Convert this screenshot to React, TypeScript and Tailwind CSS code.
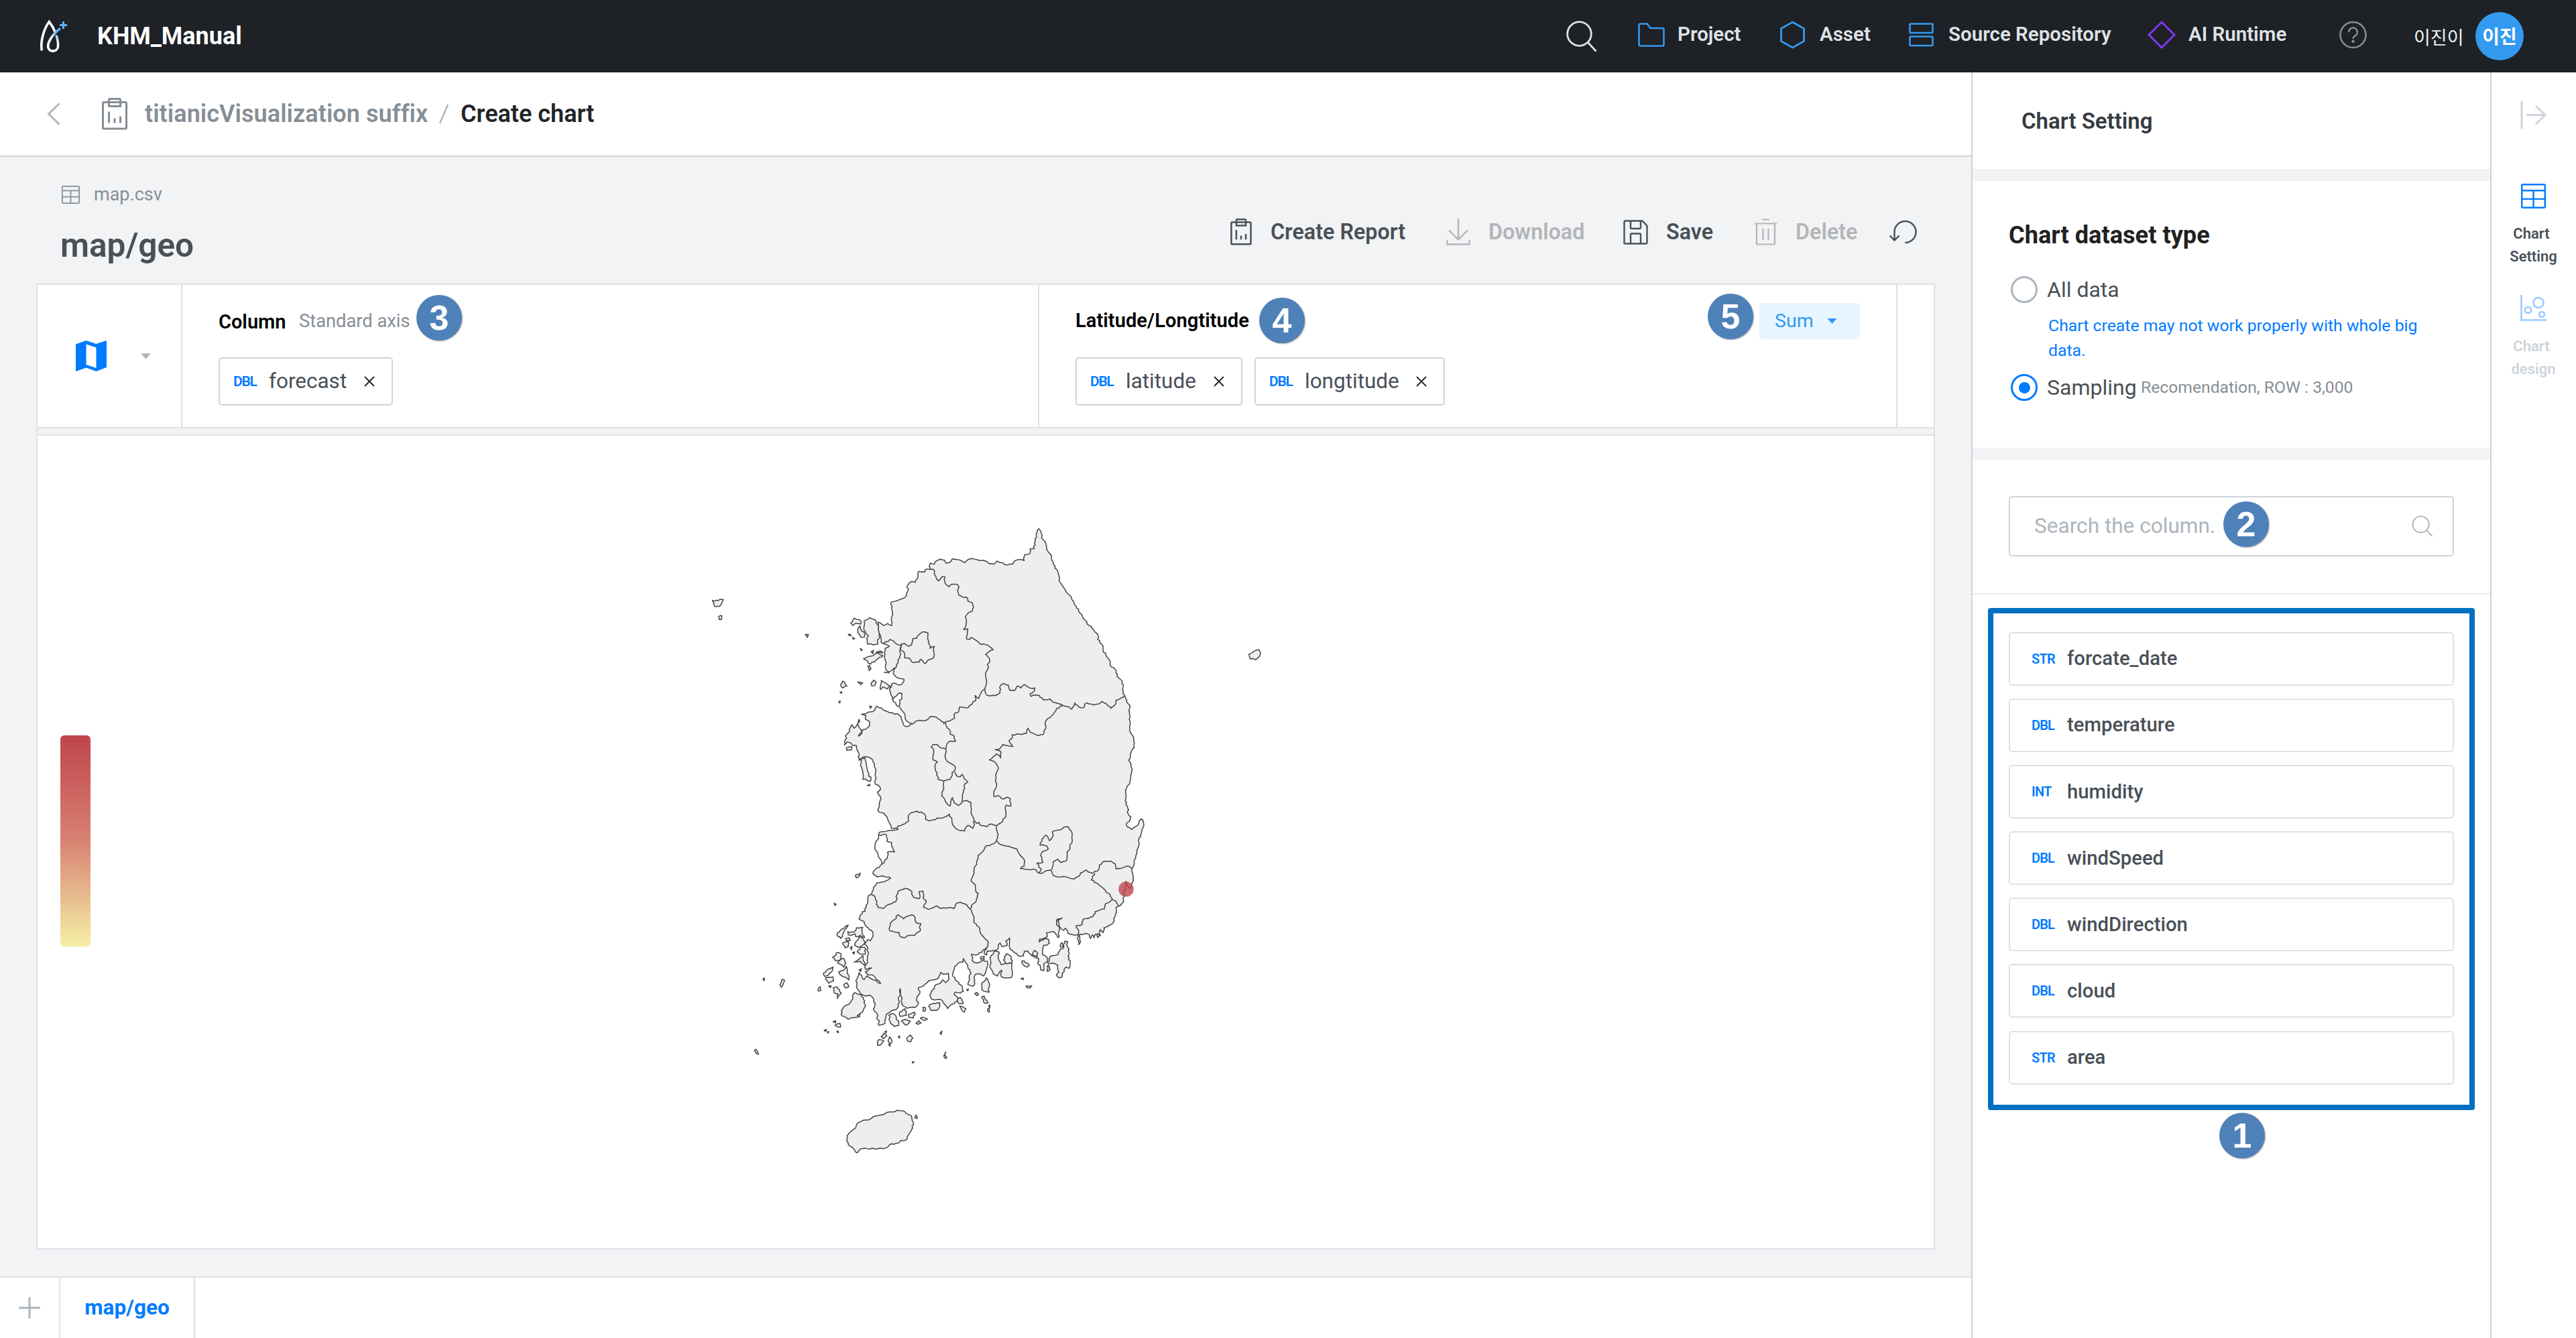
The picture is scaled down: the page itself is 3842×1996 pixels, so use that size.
import React from "react";

type P = { className?: string };

/* ---------- icons ---------- */

const Logo = () => (
  <svg className="h-[50px] w-[44px]" viewBox="0 0 44 50" fill="none">
    <defs>
      <linearGradient id="lg" x1="12" y1="40" x2="32" y2="12" gradientUnits="userSpaceOnUse">
        <stop offset="0.35" stopColor="#fff" />
        <stop offset="0.8" stopColor="#5eb3fa" />
      </linearGradient>
    </defs>
    <path d="M4.5 46.500C2 36 6 16 15.200 3.500C19 8 22 13 24 18.500" stroke="#fff" strokeWidth="3.600" />
    <path d="M26 23.500C28 30 29 37 28.500 41C27 49 14.500 49.500 13.600 40.500C13.500 36 16 31 19 26.500C23 21 27 16.500 32 13.500" stroke="url(#lg)" strokeWidth="3.600" />
    <path d="M36.500 3v11M31 8.500h11" stroke="#5eb3fa" strokeWidth="3" />
  </svg>
);

const Search = ({ className = "" }: P) => (
  <svg className={className} viewBox="0 0 46 47" fill="none" stroke="currentColor" strokeWidth="2.800">
    <circle cx="19.500" cy="19.500" r="17.800" />
    <path d="M32 32l12.500 13.500" />
  </svg>
);

const Clipboard = ({ className = "" }: P) => (
  <svg className={className} viewBox="0 0 38 48" fill="none" stroke="currentColor" strokeWidth="3">
    <rect x="1.500" y="6.500" width="35" height="39.500" rx="1.500" />
    <path d="M10.500 12.500v-9.500a1.500 1.500 0 0 1 1.500-1.500h14a1.500 1.500 0 0 1 1.500 1.500v9.500z" />
    <path d="M10.500 20.500v17M19 30.500v7M27.500 27.500v10" />
  </svg>
);

const Table = ({ className = "" }: P) => (
  <svg className={className} viewBox="0 0 38 38" fill="none" stroke="currentColor" strokeWidth="2.500">
    <rect x="1.250" y="1.250" width="35.500" height="35.500" rx="1.500" />
    <path d="M1 10.500h36M1 23.500h36M19 10.500v26" />
  </svg>
);

const Caret = ({ className = "" }: P) => (
  <svg className={className} viewBox="0 0 16 9"><path d="M0 0h16l-8 9z" fill="currentColor" /></svg>
);

const Cross = () => (
  <svg className="h-[16px] w-[16px] text-[#212529]" viewBox="0 0 16 16" stroke="currentColor" strokeWidth="1.900">
    <path d="M1 1l14 14M15 1L1 15" />
  </svg>
);

/* ---------- shared pieces ---------- */

const Badge = ({ n, className = "" }: { n: number; className?: string }) => (
  <div className={`flex h-[68px] w-[68px] items-center justify-center rounded-full bg-[#4f81b9] pb-[1px] font-['Liberation_Sans',sans-serif] text-[52px] leading-none font-bold text-white shadow-[1px_1px_2px_rgba(0,0,0,0.35)] ${className}`}>
    {n}
  </div>
);

const Chip = ({ label, width }: { label: string; width: string }) => (
  <div className={`flex h-[72px] items-center rounded-[5px] border-2 border-[#ced4da] bg-white pl-[20px] ${width}`}>
    <span className="w-[53px] text-[21px] leading-none font-semibold tracking-[-1.2px] text-[#007bff]">DBL</span>
    <span className="text-[31.5px] leading-none text-[#495057]">{label}</span>
    <span className="mr-[25px] ml-auto"><Cross /></span>
  </div>
);

/* ---------- map ---------- */

// Adds small deterministic wiggles between survey points so borders read as coastline.
const rough = (src: string, amp = 0.13) => {
  const pts = src.trim().split(/\s+/).map((p) => p.split(",").map(Number));
  const out: number[][] = [];
  for (let i = 0; i < pts.length; i++) {
    out.push(pts[i]);
    const a = pts[i];
    const b = pts[i + 1];
    if (!b) break;
    const dx = b[0] - a[0];
    const dy = b[1] - a[1];
    const len = Math.hypot(dx, dy);
    const n = len > 9 ? Math.min(4, Math.round(len / 8)) : 1;
    for (let k = 1; k < n; k++) {
      const h = Math.sin(a[0] * 12.9 + a[1] * 78.2 + k * 37.7) * 43758.5;
      const r = (h - Math.floor(h) - 0.5) * 2 * Math.min(len * amp, 3.2);
      out.push([a[0] + (dx * k) / n - (dy / len) * r, a[1] + (dy * k) / n + (dx / len) * r]);
    }
  }
  return "M" + out.map((p) => p[0].toFixed(1) + " " + p[1].toFixed(1)).join("L");
};

const NORTH_COAST =
  "246,1430 262,1400 262,1382 284,1382 278,1362 274,1342 260,1338 258,1312 234,1312 236,1302 258,1298 280,1294 296,1290 290,1284 274,1286 266,1260 262,1246 252,1226 232,1216 236,1190 240,1158 230,1140 240,1128 236,1116 224,1108 226,1082 222,1040 216,1012 200,998 184,998 172,1012 172,984 166,970 164,952 152,952 146,942 134,938 126,950 128,930 134,906 142,896 144,880 150,868 156,882 164,872 172,846 170,872 178,888 182,898 170,914 180,904 182,890 194,886 206,868 206,856 192,846 194,832 180,826 200,818 214,816 228,793 248,808 268,820 294,824 306,838 312,868 320,876 330,874 340,864 328,858 322,852 318,838 314,820 306,808 298,792 300,768 308,764 308,742 300,740 290,752 278,766 272,740 268,712 274,716 276,702 306,706 314,692 314,684 302,682 290,676 280,662 286,640 280,644 266,656 258,648 257,626 253,590 254,560 268,552 262,548 250,542 242,536 236,500 232,454 240,458 250,468 262,460 276,468 274,446 278,424 276,402 274,374 286,370 302,362 318,354 326,330 326,304 338,290 350,294 354,282 360,250 380,252 382,242 396,242 394,228 398,216 410,220 416,208 430,200 442,204 446,216 458,214 466,200 478,202 494,206 508,214 520,200 530,198 544,202 556,206 572,208 584,219 600,220 608,208 620,214 640,224 658,220 662,210 676,202 694,206 696,182 712,178 712,160 726,158 726,134 733,112 732,98 740,78 748,96 754,122 763,142 765,160 777,180 780,198 786,214 791,236 801,254 804,286 812,302 822,320 827,334 838,346 845,364 853,384 866,402 869,416 880,438 900,468 913,485 928,508 926,524 943,550 943,566 953,590 963,606 966,628 981,644 987,672 997,684 1008,708 1007,735 1013,756 1018,778 1029,792 1027,820 1028,852 1028,886 1034,908 1040,920 1042,940 1042,960 1034,972 1029,990 1024,1012 1032,1030 1034,1056 1031,1082 1028,1098 1018,1122 1016,1160 1015,1190 1021,1204 1022,1226 1031,1240 1026,1258 1016,1270 1020,1280 1034,1291 1042,1282 1054,1272 1058,1256 1064,1248 1070,1254 1071,1280 1066,1298 1062,1318 1057,1326 1057,1344 1050,1376 1046,1408 1040,1436 1034,1450";

const SOUTH_COAST =
  "1034,49 1036,68 1040,84 1038,104 1034,124 1028,136 1020,124 1016,104 1015,140 1008,150 1010,172 1008,196 1000,210 992,216 984,220 983,250 975,290 965,300 958,306 946,312 944,334 934,320 930,350 920,340 914,358 910,344 904,360 900,344 892,338 880,342 866,344 846,343 832,336 824,314 818,324 812,318 806,308 796,298 796,278 814,268 800,280 804,330 805,352 800,356 794,340 788,330 776,332 764,335 768,350 742,364 742,376 758,360 772,366 774,380 766,390 756,390 752,432 766,444 768,460 756,472 756,504 746,500 744,480 736,470 740,450 728,444 716,434 706,416 694,418 692,438 680,440 664,424 650,408 648,358 636,372 640,390 624,396 618,380 608,412 578,416 576,434 568,430 576,404 566,410 560,422 540,434 528,430 530,460 544,470 562,458 578,462 572,512 566,528 556,518 540,520 536,540 538,560 532,574 516,566 520,534 526,516 516,488 508,466 502,450 500,466 488,468 474,486 468,520 476,544 494,568 502,596 492,604 476,600 472,610 484,624 482,640 472,652 460,660 452,674 444,656 438,644 428,632 402,632 396,614 400,598 410,584 412,570 428,562 436,546 446,558 454,548 454,516 438,520 430,512 424,536 414,544 392,550 376,572 360,580 364,606 356,620 358,656 350,668 334,668 324,672 308,656 306,620 302,584 298,640 294,670 270,690 258,700 254,740 234,748 236,728 228,720 230,700 220,684 222,660 216,626 206,614 194,618 176,606 164,580 162,550 172,512 188,544 196,528 210,540 240,562 216,524 200,524 192,510 212,492 194,500 190,490 200,466 198,440 200,404 190,385 200,364 208,370 216,350 216,332 204,320 192,300 188,284 172,274 182,240 192,238 194,212 200,194 202,168 212,162 218,132 228,112 252,106 264,98 272,90 252,82 230,84 216,70 220,56 236,42 246,26";

const NORTH_BORDERS = [
  "394,242 408,242 412,264 424,288 436,270 444,272 444,296 456,312 464,302 484,304 488,346 500,354 512,354 516,370 530,376 534,394 530,410 518,416 508,432 512,452 510,468 502,484 516,482 514,508 512,522 522,524 526,516 540,526 556,544 580,548 596,566 572,584 584,600 580,632 572,660 574,686 570,720 574,746",
  "574,748 586,752 610,746 618,740 618,712 630,702 644,708 650,730 664,730 672,712 684,720 694,706 708,718 728,720 726,732 712,744 716,754 728,748 742,750 754,768 774,764 786,778 816,790 836,796 844,806 854,780 866,796 880,800 892,780 914,788 930,784 940,774 956,786 968,802 978,792 984,770 1000,760 1012,752",
  "570,724 556,744 550,762 538,750 540,772 522,790 516,800 490,796 488,812 472,828 474,842 460,852 446,856 440,864 428,848 408,836 396,836 388,848 372,852 356,852 340,866",
  "446,860 448,874 458,888 460,906 472,912 478,934 460,934 448,954 446,966 430,962 418,948 406,948 400,958 408,970 406,1010 420,1018 412,1036 414,1054 422,1088 438,1094 460,1088 466,1062 474,1054 476,1038 464,1026 452,1018 444,1000 446,966",
  "474,1060 480,1074 492,1078 498,1068 504,1086 516,1100 506,1108 502,1140 498,1180 486,1194 472,1182 468,1162 460,1196 444,1172 434,1156 440,1096",
  "498,1178 514,1174 526,1182 526,1220 536,1254 532,1286 516,1274 506,1296 488,1294 472,1278 466,1262 458,1228 440,1242 420,1244 396,1256 382,1248 380,1230 354,1216 338,1222 330,1230 328,1258 312,1270 296,1276 292,1284",
  "536,1254 544,1266 552,1262 556,1274 576,1280 584,1270 606,1274",
  "816,792 796,802 786,826 768,844 760,866 762,884 754,908 740,912 720,902 706,882 700,904 680,906 656,908 656,922 646,932 658,956 640,952 626,948 616,966 602,968 618,974 620,1002 606,986 596,998 584,1010 604,1022 612,1048 604,1070 606,1120 598,1140 598,1158 612,1154 628,1168 640,1160 650,1166 652,1196 638,1192 634,1206 636,1230 626,1258 612,1270 606,1276 608,1296 612,1310 606,1334",
  "606,1336 598,1348 570,1362 564,1378 548,1396 544,1432 536,1444 536,1464 526,1494 540,1520 542,1544",
  "606,1334 620,1352 636,1358 656,1364 672,1370 684,1398 694,1412 694,1438 682,1448 700,1452 724,1450 740,1466 750,1468 766,1456 778,1454 786,1476 800,1482 820,1480 852,1490 866,1480 872,1466 890,1454 912,1468",
  "740,1466 748,1450 734,1426 754,1422 746,1396 752,1380 770,1370 766,1358 744,1354 750,1330 764,1314 774,1336 784,1320 784,1298 808,1292 818,1282 834,1280 842,1296 846,1336 838,1360 830,1390 826,1418 810,1424 800,1410 786,1420 784,1440 782,1454",
  "912,1466 930,1452 932,1434 950,1418 968,1418 982,1430 984,1450 1004,1446 1020,1438 1036,1450",
  "304,544 316,540 328,552 338,546 342,522 354,520 364,502 372,494 390,498 392,530 396,560 410,552 408,598 392,606 380,622 366,604 362,616 340,616 332,600 316,598 312,572 304,568 304,544",
  "250,542 270,524 286,538 306,548 302,566 300,600 290,636 280,644",
  "234,1312 222,1370 246,1430",
  "278,766 296,796",
  "250,657 268,660",
];

const SOUTH_BORDERS = [
  "542,153 549,158 544,178 538,200 522,226",
  "918,68 906,98 928,116 940,130 952,152 966,164 972,186 984,192 992,214",
  "972,186 966,194 950,206 948,228 918,240 912,262 880,274 878,296 858,304 866,324 864,344",
  "212,164 222,172 228,192 232,222 252,224 262,210 288,196 292,164 300,144 316,136 334,144 346,178 362,182 362,150 374,148 374,178 384,190 376,220 392,230 406,222 418,214 430,226 448,224 472,226 480,202 492,198 508,206 522,226",
  "522,226 532,254 536,290 554,316 558,342 578,370 580,394 570,408",
  "270,292 284,276 296,254 312,272 340,254 350,268 352,288 368,294 364,328 348,346 332,346 314,358 302,352 298,332 270,326 270,292",
];

const NORTH_ISLES = [
  "188,450 206,436 226,450 234,470 236,510 232,542 200,544 196,520 202,508 188,488",
  "146,458 158,438 178,450 178,462 160,460 152,468",
  "168,484 176,470 180,490 190,498 190,514 180,516 168,496",
  "186,602 206,592 216,590 230,578 248,590 232,602 208,624",
  "200,632 206,630 210,642 204,650",
  "114,706 120,692 134,712 120,720",
  "168,696 184,700 178,706",
  "210,700 218,688 226,696 222,710 212,712",
  "240,712 242,690 258,702 270,712 262,724 248,716 240,726",
  "1404,584 1420,572 1436,566 1438,592 1426,606 1408,602",
  "2,504 12,504 8,516",
  "132,962 150,958 148,970 134,972",
  "176,1006 190,1002 198,1048 202,1074 210,1080 208,1096 184,1088 180,1040",
  "198,1114 206,1108 206,1114",
  "160,1478 176,1466 172,1480 164,1486",
  "206,792 212,796 208,802",
  "138,506 142,502 148,510",
  "152,516 158,520 154,524",
  "176,560 182,566 180,570",
  "210,574 218,568 216,582",
  "226,576 244,572 246,580",
  "112,738 117,735 118,741",
  "108,778 112,771 112,780",
];

const SOUTH_ISLES = [
  "134,1244 150,1220 160,1210 164,1194 180,1178 210,1166 226,1154 250,1148 268,1136 300,1130 316,1134 322,1144 338,1154 344,1184 338,1216 328,1240 320,1262 304,1264 296,1276 268,1284 256,1298 222,1302 190,1298 176,1302 166,1320 154,1300 142,1288 134,1268",
  "348,1162 352,1150 356,1166",
  "116,684 124,666 142,652 158,602 180,612 190,640 190,668 174,706 138,722 118,706",
  "778,438 802,430 808,408 818,404 822,372 832,374 832,400 836,424 834,454 840,460 836,494 826,488 820,498 812,534 804,536 796,524 804,510 800,480 784,470 770,474 772,450",
  "602,416 614,420 612,450 622,478 640,470 656,472 654,534 632,536 622,532 622,502 610,528 596,518 586,480 590,436",
  "638,428 654,444 654,468 640,474 628,456",
  "718,434 726,414 734,420 736,442",
  "766,484 772,480 776,500 768,508",
  "266,704 280,696 290,712 298,748 284,754 272,738",
  "300,690 318,674 322,704 302,708",
  "328,700 348,690 344,716 330,714",
  "306,730 320,722 334,730 320,748",
  "352,740 360,728 368,738 358,744",
  "366,716 374,712 388,720 380,728",
  "374,668 382,670 380,686 374,684",
  "392,664 400,654 428,648 426,668 418,682 398,680",
  "484,630 492,624 502,650 488,652",
  "490,662 510,674 504,690 498,684",
  "230,824 236,812 250,818 238,838 230,838",
  "242,800 250,784 260,796 250,808",
  "253,778 259,774 258,782",
  "264,820 268,800 276,816 270,842",
  "324,804 334,792 342,806 336,822 326,820",
  "296,800 300,796 300,806",
  "428,784 434,774 432,790",
  "440,884 446,868 446,898",
  "340,912 346,912 342,918",
  "560,560 574,536 582,556 584,600 560,590",
  "560,620 568,618 580,648 570,650",
  "578,684 584,656 586,664 584,690",
  "556,444 568,440 568,454 556,452",
  "538,606 544,602 550,610 544,616",
  "512,590 518,586 516,594",
  "686,462 694,460 710,480 704,488 690,476",
  "700,572 718,572 712,582 702,580",
  "684,540 690,536 692,544",
  "102,342 110,330 118,318 138,300 126,324 120,350 114,360",
  "136,330 158,330 164,312 184,310 182,340 190,356 176,346 162,352 160,340 148,346 138,344",
  "164,372 172,352 184,360 192,378 184,390 170,400 158,390",
  "130,360 142,358 144,370 132,370",
  "120,380 138,374 138,396 128,402",
  "145,400 150,396 148,410",
  "152,422 158,420 156,430",
  "88,444 106,422 116,430 114,456 98,460",
  "104,470 122,448 130,470 124,488",
  "108,510 124,502 132,484 140,546 120,530",
  "60,514 74,498 90,488 88,504 76,524 64,530",
  "66,536 90,532 92,550 76,560",
  "124,566 134,558 140,576 130,582",
  "90,580 102,576 116,604 104,628 106,608 94,604",
  "76,572 84,572 82,580",
  "42,588 50,576 52,592 44,596",
  "156,466 184,436 190,480 176,462",
  "166,420 176,400 190,400 192,430 176,430",
  "172,500 180,496 178,508",
  "166,706 174,698 174,712",
  "90,732 98,728 98,738",
  "96,748 112,740 114,756 104,756",
  "62,770 70,768 66,776",
  "72,778 76,776 75,784",
  "102,778 105,772 107,782",
  "94,202 100,208 95,212",
  "862,356 868,346 872,374 866,388",
  "926,338 936,346 926,356",
  "808,398 814,378 818,396",
];

const FAR_ISLES = [
  "188,236 214,237 236,234 232,240 220,252 198,252",
  "216,278 230,276 228,286 218,286",
  "414,1220 421,1218 419,1225",
  "490,1236 498,1222 511,1224 496,1242",
  "376,1406 382,1403 394,1416 384,1414",
];

const KoreaMap = () => {
  const ve = { vectorEffect: "non-scaling-stroke" as const };
  const nc = rough(NORTH_COAST);
  const sc = rough(SOUTH_COAST);
  const isle = (s: string) => <path key={s} d={rough(s + " " + s.split(" ")[0]) + "Z"} fill="#eee" {...ve} />;
  const line = (s: string) => <path key={s} d={rough(s)} {...ve} />;
  return (
    <svg className="absolute inset-0 h-full w-full" viewBox="56 650 2828 1212" fill="none" stroke="#444" strokeWidth="1.500" strokeLinejoin="round">
      <g transform="translate(1200 760) scale(0.47194 0.36990)">
        <path d={nc + "Z"} fill="#eee" stroke="none" />
      </g>
      <g transform="translate(1200 1280) scale(0.47194 0.33333)">
        <path d={sc + "Z"} fill="#eee" stroke="none" />
        <path d="M240 22H1036V54H240Z" fill="#eee" stroke="none" />
        <path d={sc} {...ve} />
        {SOUTH_BORDERS.map(line)}
        {SOUTH_ISLES.map(isle)}
      </g>
      <g transform="translate(1200 760) scale(0.47194 0.36990)">
        <path d={nc} {...ve} />
        {NORTH_BORDERS.map(line)}
        {NORTH_ISLES.map(isle)}
      </g>
      <g transform="translate(1000 760) scale(0.33333 0.57398)">{FAR_ISLES.map(isle)}</g>
      <circle cx="1679.500" cy="1326.500" r="11.200" fill="#bf444c" fillOpacity="0.8" stroke="none" />
    </svg>
  );
};

/* ---------- page ---------- */

const columns = [
  ["STR", "forcate_date"],
  ["DBL", "temperature"],
  ["INT", "humidity"],
  ["DBL", "windSpeed"],
  ["DBL", "windDirection"],
  ["DBL", "cloud"],
  ["STR", "area"],
];

const Header = () => (
  <header className="flex h-[108px] shrink-0 items-center bg-[#1e2126] text-[#dee2e6]">
    <div className="ml-[58px] w-[87px]"><Logo /></div>
    <div className="w-[2191px] text-[36px] leading-none font-bold text-white">KHM_Manual</div>
    <Search className="h-[47px] w-[46px]" />
    <div className="flex items-center pb-[4px] text-[29.5px] leading-none font-semibold whitespace-nowrap">
      <svg className="ml-[61px] h-[36px] w-[40px]" viewBox="0 0 40 36" fill="none" stroke="#339af0" strokeWidth="2.600"><path d="M1.500 32.500v-29a2 2 0 0 1 2-2h10l5 6.500h18a2 2 0 0 1 2 2v22.500a2 2 0 0 1-2 2h-33a2 2 0 0 1-2-2z" /></svg>
      <span className="ml-[19px] w-[153px]">Project</span>
      <svg className="h-[42px] w-[37px]" viewBox="0 0 37 42" fill="none" stroke="#339af0" strokeWidth="2.800"><path d="M18.500 2L35.500 11.500v19L18.500 40L1.500 30.500v-19z" /></svg>
      <span className="ml-[22px] w-[133px]">Asset</span>
      <svg className="h-[36px] w-[37px]" viewBox="0 0 37 36" fill="none" stroke="#339af0" strokeWidth="2.600"><rect x="1.500" y="1.500" width="34" height="13.500" rx="1" /><rect x="1.500" y="20.500" width="34" height="13.500" rx="1" /></svg>
      <span className="ml-[22px] w-[297px]">Source Repository</span>
      <svg className="h-[42px] w-[42px]" viewBox="0 0 42 42" fill="none" stroke="#8338ff" strokeWidth="2.800"><path d="M21 2L40 21L21 40L2 21z" /></svg>
      <span className="ml-[19px] w-[225px]">AI Runtime</span>
      <svg className="h-[42px] w-[41px]" viewBox="0 0 42 42" fill="none" stroke="#868e96" strokeWidth="2.600"><circle cx="21" cy="21" r="19.500" /><path d="M14.500 17a6.500 6.500 0 1 1 9.500 5.500c-2 1.200-3 2-3 4.500" /><circle cx="21" cy="31" r="1" fill="#868e96" /></svg>
    </div>
    <span className="ml-[70px] w-[92px] font-['Noto_Sans_CJK_KR',sans-serif] text-[27px] leading-none whitespace-nowrap text-[#f1f3f5]">이진이</span>
    <span className="flex h-[72px] w-[72px] items-center justify-center rounded-full bg-[#339af0] pb-[2px] font-['Noto_Sans_CJK_KR',sans-serif] text-[28px] leading-none font-bold text-white">이진</span>
  </header>
);

const Actions = () => (
  <div className="mt-[92px] mr-[81px] ml-auto flex h-[40px] items-center text-[32.3px] leading-none font-semibold whitespace-nowrap text-[#495057]">
    <Clipboard className="h-[40px] w-[32px]" />
    <span className="ml-[28px] w-[262px]">Create Report</span>
    <svg className="h-[40px] w-[36px] text-[#b3b5b8]" viewBox="0 0 36 40" fill="none" stroke="currentColor" strokeWidth="2.400"><path d="M18 0v31M4 17.500L18 31.500L32 17.500M1.500 32v6.500h33v-6.500" /></svg>
    <span className="ml-[27px] w-[201px] text-[#b3b5b8]">Download</span>
    <svg className="h-[37px] w-[37px]" viewBox="0 0 37 37" fill="none" stroke="currentColor" strokeWidth="2.400"><path d="M3 1.500h25.500l7 7.500v24.500a2 2 0 0 1-2 2h-30.500a1.500 1.500 0 0 1-1.500-1.500v-31a1.500 1.500 0 0 1 1.500-1.500z" /><path d="M11 1.500v10a1.500 1.500 0 0 0 1.500 1.500h12a1.500 1.500 0 0 0 1.500-1.500v-10M11 35.500v-13.500a1.500 1.500 0 0 1 1.500-1.500h12a1.500 1.500 0 0 1 1.500 1.500v13.500" /></svg>
    <span className="ml-[27px] w-[131px]">Save</span>
    <svg className="h-[40px] w-[35px] text-[#b3b5b8]" viewBox="0 0 35 40" fill="none" stroke="currentColor" strokeWidth="2.200"><path d="M12 1.500h11M1 7.500h33M4 7.500v29.500a1.500 1.500 0 0 0 1.500 1.500h24a1.500 1.500 0 0 0 1.500-1.500v-29.500M13.500 15v17M21.500 15v17" /></svg>
    <span className="ml-[27px] w-[139px] text-[#b3b5b8]">Delete</span>
    <svg className="h-[36px] w-[42px]" viewBox="0 0 42 36" fill="none" stroke="currentColor" strokeWidth="2.400"><path d="M8.500 31v-13.500a16 16 0 1 1 16 16.500M1.500 23.500l7 7l7-7" /></svg>
  </div>
);

const DatasetPanel = () => (
  <aside className="flex w-[774px] shrink-0 flex-col border-r-2 border-[#ced4da] bg-white">
    <div className="flex h-[144px] items-center pl-[73px] text-[33px] leading-none font-semibold text-[#343a40]">Chart Setting</div>
    <div className="h-[18px] bg-[#f1f3f5]" />
    <section className="h-[398px] pt-[61px] pl-[54px]">
      <h2 className="text-[36.2px] leading-[40px] font-bold text-[#212121]">Chart dataset type</h2>
      <div className="mt-[41px] flex h-[40px] items-center pl-[3px] text-[32px] text-[#495057]">
        <span className="mr-[14px] h-[40px] w-[40px] rounded-full border-[3px] border-[#adb5bd]" />
        All data
      </div>
      <p className="mt-[15px] ml-[59px] w-[570px] text-[24.8px] leading-[37px] text-[#007bff]">Chart create may not work properly with whole big data.</p>
      <div className="mt-[17px] flex h-[40px] items-center pl-[3px] text-[32px] text-[#495057]">
        <span className="mr-[14px] flex h-[40px] w-[40px] items-center justify-center rounded-full border-[3px] border-[#007bff]">
          <span className="h-[17px] w-[17px] rounded-full bg-[#007bff]" />
        </span>
        <span className="w-[140px]">Sampling</span>
        <span className="text-[24.700px] text-[#868e96]">Recomendation, ROW : 3,000</span>
      </div>
    </section>
    <div className="h-[18px] bg-[#f1f3f5]" />
    <section className="h-[201px] border-b-2 border-[#e9ecef] pt-[54px] pl-[54px]">
      <div className="relative flex h-[90px] w-[664px] items-center rounded-[5px] border-2 border-[#ced4da] pr-[29px] pl-[36px] text-[31.600px] text-[#adb5bd]">
        Search the column.
        <Search className="ml-auto h-[32px] w-[32px]" />
        <Badge n={2} className="absolute top-[6px] left-[318px]" />
      </div>
    </section>
    <div className="mt-[20px] ml-[23px] flex h-[749px] w-[726px] flex-col gap-[19.100px] rounded-[4px] border-8 border-[#0070c0] px-[23px] pt-[28px]">
      {columns.map(([t, name]) => (
        <div key={name} className="flex h-[80px] shrink-0 items-center rounded-[5px] border-2 border-[#dee2e6] pl-[32px]">
          <span className="w-[53px] text-[20px] leading-none font-semibold tracking-[-0.800px] text-[#007bff]">{t}</span>
          <span className="text-[29.300px] leading-none font-medium text-[#495057]">{name}</span>
        </div>
      ))}
    </div>
    <Badge n={1} className="mt-[4px] ml-[368px]" />
  </aside>
);

const Rail = () => (
  <nav className="flex w-[126px] shrink-0 flex-col items-center bg-white pt-[43px] pr-[1px] text-center text-[22px] leading-[34px] font-semibold">
    <svg className="h-[41px] w-[39px]" viewBox="0 0 39 41" fill="none" stroke="#ced4da" strokeWidth="3"><path d="M2 0v41M9 20.500h28M23 7l14 13.500L23 34" /></svg>
    <Table className="mt-[82px] h-[37px] w-[37px] text-[#007bff]" />
    <div className="mt-[21px] text-[#495057]"><div className="pr-[6px]">Chart</div><div>Setting</div></div>
    <svg className="mt-[40px] h-[39px] w-[39px]" viewBox="0 0 39 39" fill="none" stroke="#99caff" strokeWidth="2.600"><path d="M1.500 0v37.500H39" /><circle cx="27" cy="11.500" r="7.500" /><circle cx="11.500" cy="22.500" r="4.600" /><circle cx="32" cy="29" r="4" /></svg>
    <div className="mt-[21px] text-[#ced4da]"><div className="pr-[6px]">Chart</div><div>design</div></div>
  </nav>
);

export default function App() {
  return (
    <div className="flex h-[1996px] w-[3842px] flex-col overflow-hidden bg-white font-['Roboto','Noto_Sans_CJK_KR',sans-serif]">
      <Header />
      <div className="flex min-h-0 flex-1">
        <main className="flex w-[2942px] shrink-0 flex-col border-r-2 border-[#ced4da] bg-[#f1f3f5]">
          <div className="flex h-[126px] shrink-0 items-center border-b-2 border-[#ced4da] bg-white text-[36px] leading-none font-semibold whitespace-nowrap">
            <svg className="ml-[70px] h-[34px] w-[20px]" viewBox="0 0 20 34" fill="none" stroke="#adb5bd" strokeWidth="3"><path d="M18.500 1.500L2.500 17L18.500 32.500" /></svg>
            <Clipboard className="ml-[62px] h-[48px] w-[38px] text-[#868e96]" />
            <span className="ml-[26px] w-[438px] tracking-[0.08px] text-[#868e96]">titianicVisualization suffix</span>
            <svg className="h-[30px] w-[16px]" viewBox="0 0 16 30" stroke="#adb5bd" strokeWidth="2.400"><path d="M14 1L2 29" /></svg>
            <span className="ml-[17px] text-[#212529]">Create chart</span>
          </div>

          <div className="flex h-[189px] shrink-0 pl-[92px]">
            <div className="pt-[36px]">
              <div className="flex h-[40px] items-center text-[27px] text-[#868e96]">
                <Table className="mr-[21px] h-[27px] w-[27px]" />
                map.csv
              </div>
              <h1 className="mt-[26px] -ml-[2px] text-[49.500px] leading-[60px] font-semibold text-[#495057]">map/geo</h1>
            </div>
            <Actions />
          </div>

          <div className="ml-[54px] flex h-[1441px] w-[2832px] shrink-0 flex-col border-2 border-[#dee2e6] bg-white">
            <div className="flex h-[212px] shrink-0">
              <div className="flex w-[216px] items-center border-r-2 border-[#dee2e6] pl-[57px]">
                <svg className="h-[46px] w-[46px]" viewBox="0 0 46 46" fill="#007bff"><path fillRule="evenodd" d="M0 5.500L15.500 0L30.500 5L46 0V40L30.500 46L15.500 40.500L0 46zM15.500 5.500V36L30.500 41V10.500z" /></svg>
                <Caret className="ml-[51px] h-[9px] w-[15px] text-[#adb5bd]" />
              </div>
              <div className="relative w-[1278px] border-r-2 border-[#dee2e6] pt-[35px] pl-[54px]">
                <div className="flex h-[40px] items-center leading-none">
                  <span className="w-[120px] text-[29px] font-semibold text-black">Column</span>
                  <span className="text-[27.300px] text-[#868e96]">Standard axis</span>
                </div>
                <div className="mt-[33px] flex"><Chip label="forecast" width="w-[260px]" /></div>
                <Badge n={3} className="absolute top-[15px] left-[349px]" />
              </div>
              <div className="relative w-[1280px] border-r-2 border-[#dee2e6] pt-[27px] pl-[54px]">
                <div className="flex h-[54px] items-center pr-[54px] leading-none">
                  <span className="text-[29.200px] font-semibold text-black">Latitude/Longtitude</span>
                  <button className="ml-auto flex h-[54px] w-[150px] items-center rounded-[4px] bg-[#e7f5ff] pr-[34px] pl-[23px] text-[28.500px] text-[#339af0]">
                    Sum
                    <Caret className="ml-auto h-[8px] w-[15px]" />
                  </button>
                </div>
                <div className="mt-[27px] flex gap-[18px]">
                  <Chip label="latitude" width="w-[249px]" />
                  <Chip label="longtitude" width="w-[284px]" />
                </div>
                <Badge n={4} className="absolute top-[19px] left-[328px]" />
                <Badge n={5} className="absolute top-[13px] left-[997px]" />
              </div>
            </div>
            <div className="h-[13px] shrink-0 border-y-2 border-[#dee2e6] bg-[#f1f3f5]" />
            <div className="relative flex flex-1 items-center pl-[34px]">
              <KoreaMap />
              <div className="mb-[3px] h-[315px] w-[45px] rounded-[6px] bg-[linear-gradient(to_bottom,#bf444c,#d88273_50%,#f6efa6)]" />
            </div>
          </div>

          <div className="mt-auto flex h-[92px] shrink-0 items-stretch border-t-2 border-[#dee2e6] bg-white">
            <div className="flex w-[90px] items-center border-r-2 border-[#dee2e6] pl-[28px]">
              <svg className="h-[32px] w-[32px]" viewBox="0 0 32 32" stroke="#adb5bd" strokeWidth="3"><path d="M16 0v32M0 16h32" /></svg>
            </div>
            <div className="flex w-[201px] items-center justify-center border-r-2 border-[#dee2e6] text-[31.500px] font-bold text-[#007bff]">map/geo</div>
          </div>
        </main>
        <DatasetPanel />
        <Rail />
      </div>
    </div>
  );
}
